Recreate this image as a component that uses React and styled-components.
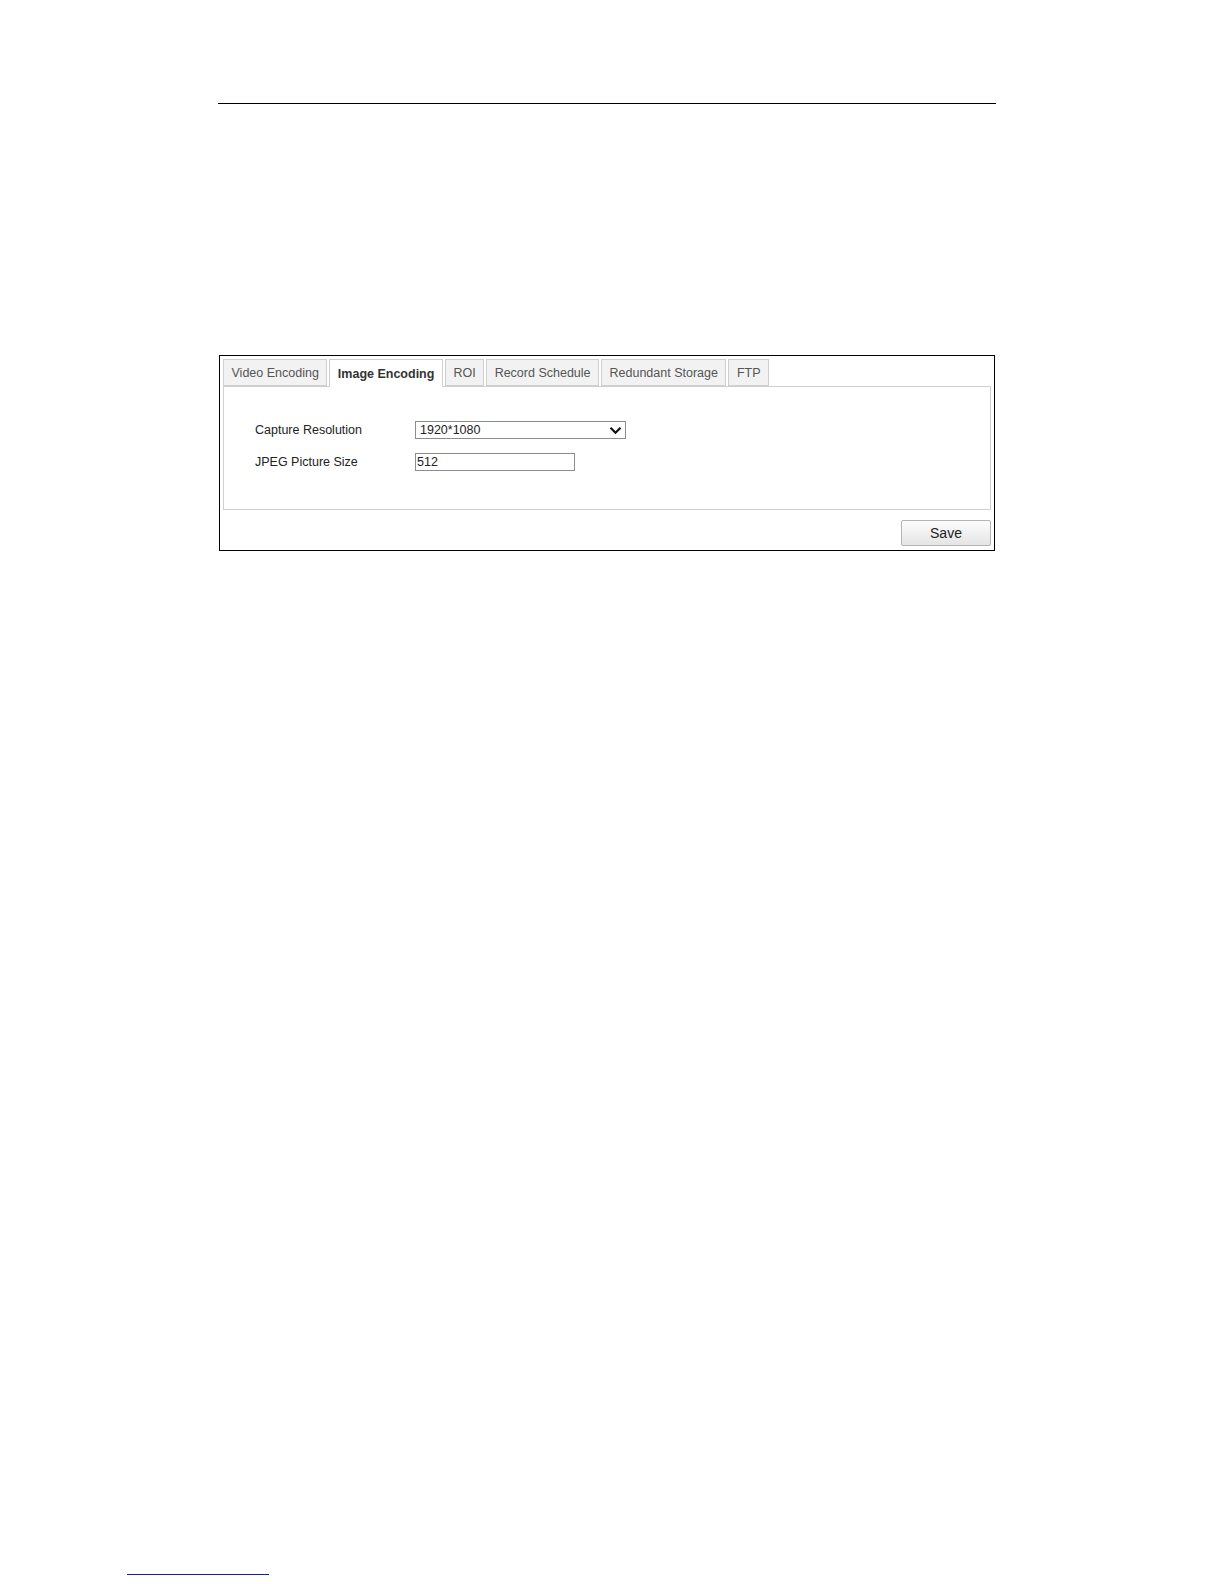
import React, { useState } from "react"
import styled, { createGlobalStyle } from "styled-components"

const GlobalStyle = createGlobalStyle`
  html, body {
    margin: 0;
    padding: 0;
    background: #fff;
  }
  body {
    font-family: "Liberation Sans", Arial, sans-serif;
  }
`

const Page = styled.div`
  width: 1224px;
  height: 1584px;
  display: flex;
  flex-direction: column;
  box-sizing: border-box;
  padding-top: 103px;
`

const HeaderRule = styled.div`
  margin-left: 218px;
  width: 778px;
  height: 1px;
  background: #000;
`

const Frame = styled.div`
  margin-top: 251px;
  margin-left: 219px;
  width: 776px;
  box-sizing: border-box;
  border: 1px solid #000;
  padding: 3px 3px 4px 3px;
  display: flex;
  flex-direction: column;
`

const TabBar = styled.div`
  display: flex;
  gap: 2px;
  height: 27px;
  position: relative;
  z-index: 1;
`

const Tab = styled.div`
  box-sizing: border-box;
  height: ${(props) => (props.active ? "28px" : "27px")};
  padding: 0 7.5px;
  display: flex;
  align-items: center;
  border: 1px solid #cfcfcf;
  border-bottom: ${(props) => (props.active ? "none" : "1px solid #cfcfcf")};
  background: ${(props) => (props.active ? "#fff" : "#f2f2f2")};
  color: ${(props) => (props.active ? "#333" : "#555")};
  font-weight: ${(props) => (props.active ? "bold" : "normal")};
  font-size: 12.5px;
  cursor: pointer;
  white-space: nowrap;
`

const Panel = styled.div`
  box-sizing: border-box;
  width: 768px;
  height: 124px;
  border: 1px solid #cfcfcf;
  padding: 34px 0 0 31px;
  display: flex;
  flex-direction: column;
  gap: 14px;
`

const Row = styled.div`
  display: flex;
  align-items: center;
  height: 18px;
`

const Label = styled.div`
  width: 160px;
  font-size: 12.5px;
  color: #222;
`

const SelectBox = styled.div`
  box-sizing: border-box;
  width: 211px;
  height: 18px;
  border: 1px solid #8c8c8c;
  display: flex;
  align-items: center;
  justify-content: space-between;
  padding: 0 3px 0 4px;
  font-size: 12.5px;
  color: #222;
  background: #fff;
`

const TextInput = styled.input`
  box-sizing: border-box;
  width: 160px;
  height: 18px;
  border: 1px solid #8c8c8c;
  padding: 0 1px;
  font-family: "Liberation Sans", Arial, sans-serif;
  font-size: 12.5px;
  color: #222;
  outline: none;
`

const Footer = styled.div`
  display: flex;
  justify-content: flex-end;
  padding-top: 10px;
`

const SaveButton = styled.button`
  width: 90px;
  height: 26px;
  border: 1px solid #b4b4b4;
  border-radius: 2px;
  background: linear-gradient(#fdfdfd, #e4e4e4);
  font-family: "Liberation Sans", Arial, sans-serif;
  font-size: 14px;
  color: #222;
  padding: 0;
  cursor: pointer;
`

const FootRule = styled.div`
  margin-top: auto;
  margin-bottom: 9px;
  margin-left: 127px;
  width: 142px;
  height: 1px;
  background: #1c1c8c;
`

const tabs = [
  "Video Encoding",
  "Image Encoding",
  "ROI",
  "Record Schedule",
  "Redundant Storage",
  "FTP",
]

const Chevron = () => (
  <svg width="13" height="9" viewBox="0 0 13 9">
    <path d="M1.5 1.8 L6.5 6.8 L11.5 1.8" fill="none" stroke="#111" strokeWidth="2.2" />
  </svg>
)

const App = () => {
  const [active, setActive] = useState("Image Encoding")
  const [size, setSize] = useState("512")

  return (
    <>
      <GlobalStyle />
      <Page>
        <HeaderRule />
        <Frame>
          <TabBar>
            {tabs.map((t) => (
              <Tab key={t} active={t === active} onClick={() => setActive(t)}>
                {t}
              </Tab>
            ))}
          </TabBar>
          <Panel>
            <Row>
              <Label>Capture Resolution</Label>
              <SelectBox>
                1920*1080
                <Chevron />
              </SelectBox>
            </Row>
            <Row>
              <Label>JPEG Picture Size</Label>
              <TextInput value={size} onChange={(e) => setSize(e.target.value)} />
            </Row>
          </Panel>
          <Footer>
            <SaveButton>Save</SaveButton>
          </Footer>
        </Frame>
        <FootRule />
      </Page>
    </>
  )
}

export default App
